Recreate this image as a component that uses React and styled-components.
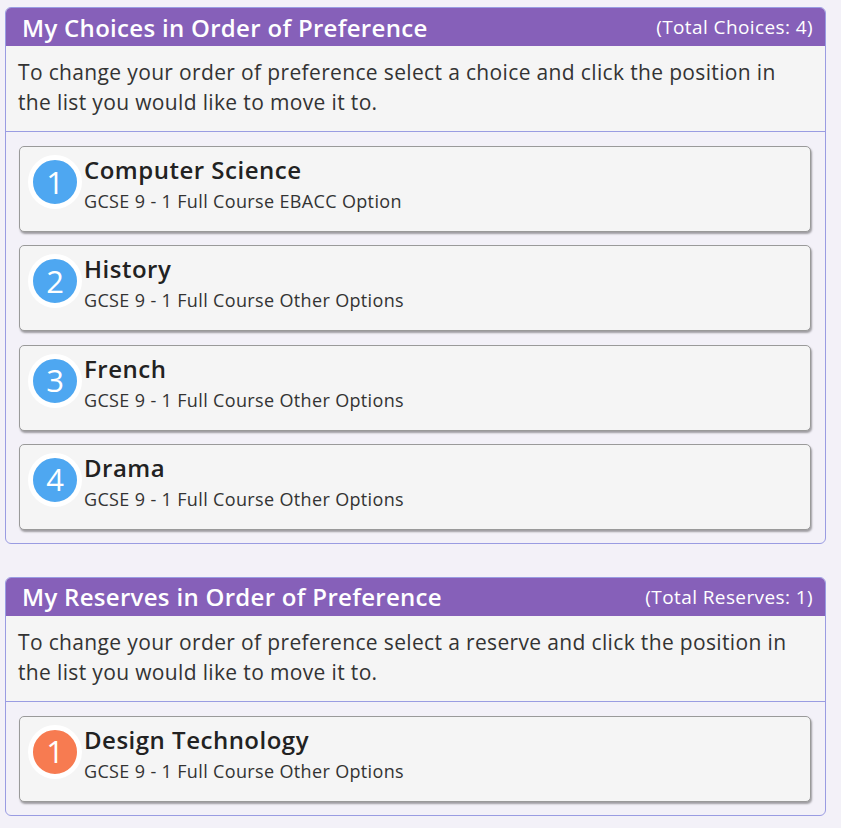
import React from 'react';
import styled, { createGlobalStyle } from 'styled-components';

const GlobalStyle = createGlobalStyle`
  body {
    margin: 0;
    background: #f3f1f8;
    font-family: "Open Sans", "Noto Sans", sans-serif;
    color: #333;
  }
`;

const choices = [
  { name: 'Computer Science', detail: 'GCSE 9 - 1 Full Course EBACC Option' },
  { name: 'History', detail: 'GCSE 9 - 1 Full Course Other Options' },
  { name: 'French', detail: 'GCSE 9 - 1 Full Course Other Options' },
  { name: 'Drama', detail: 'GCSE 9 - 1 Full Course Other Options' },
];

const reserves = [
  { name: 'Design Technology', detail: 'GCSE 9 - 1 Full Course Other Options' },
];

const Panel = ({ title, total, kind, items, badge }) => (
  <PanelBox>
    <Header>
      <HeaderTitle>{title}</HeaderTitle>
      <HeaderTotal>{total}</HeaderTotal>
    </Header>
    <Intro>
      {`To change your order of preference select a ${kind} and click the position in the list you would like to move it to.`}
    </Intro>
    <List>
      {items.map((item, i) => (
        <Card key={item.name}>
          <Badge color={badge}>{i + 1}</Badge>
          <CardText>
            <CardTitle>{item.name}</CardTitle>
            <CardDetail>{item.detail}</CardDetail>
          </CardText>
        </Card>
      ))}
    </List>
  </PanelBox>
);

const App = () => (
  <Page>
    <GlobalStyle />
    <Panel
      title="My Choices in Order of Preference"
      total="(Total Choices: 4)"
      kind="choice"
      items={choices}
      badge="#4ea7f1"
    />
    <Panel
      title="My Reserves in Order of Preference"
      total="(Total Reserves: 1)"
      kind="reserve"
      items={reserves}
      badge="#f77b51"
    />
  </Page>
);

const Page = styled.div`
  display: flex;
  flex-direction: column;
  gap: 33px;
  padding: 7px 15px 12px 5px;
`;

const PanelBox = styled.section`
  border: 1px solid #9a9ce2;
  border-radius: 6px;
  background: #f3f1f8;
  overflow: hidden;
`;

const Header = styled.div`
  display: flex;
  align-items: center;
  justify-content: space-between;
  height: 38px;
  padding: 0 12px 0 16px;
  background: #8660b9;
  color: #fff;
`;

const HeaderTitle = styled.h2`
  margin: 0;
  font-size: 24px;
  font-weight: 600;
  letter-spacing: 0.3px;
`;

const HeaderTotal = styled.span`
  font-size: 19px;
  font-weight: 400;
  letter-spacing: 0.4px;
`;

const Intro = styled.p`
  margin: 0;
  padding: 11px 20px 14px 12px;
  background: #f5f5f5;
  border-bottom: 1px solid #9a9ce2;
  font-size: 21px;
  line-height: 30px;
  letter-spacing: 0.35px;
  color: #333;
`;

const List = styled.div`
  display: flex;
  flex-direction: column;
  gap: 13.3px;
  padding: 14px 14px 13px 13px;
`;

const Card = styled.div`
  display: flex;
  align-items: flex-start;
  gap: 2px;
  box-sizing: border-box;
  height: 86px;
  padding: 8px;
  background: #f5f5f5;
  border: 1px solid #9a9a9a;
  border-radius: 5px;
  box-shadow: 1px 2px 2px rgba(0, 0, 0, 0.35);
`;

const Badge = styled.div`
  flex: none;
  display: flex;
  align-items: center;
  justify-content: center;
  width: 44px;
  height: 44px;
  border: 5px solid #fff;
  border-radius: 50%;
  background: ${(p) => p.color};
  color: #fff;
  font-size: 31px;
  line-height: 1;
`;

const CardText = styled.div`
  display: flex;
  flex-direction: column;
`;

const CardTitle = styled.div`
  font-size: 24px;
  font-weight: 600;
  line-height: 30px;
  letter-spacing: 0.5px;
  color: #222;
`;

const CardDetail = styled.div`
  margin-top: 4px;
  font-size: 18px;
  line-height: 24px;
  letter-spacing: 0.35px;
  color: #333;
`;

export default App;
